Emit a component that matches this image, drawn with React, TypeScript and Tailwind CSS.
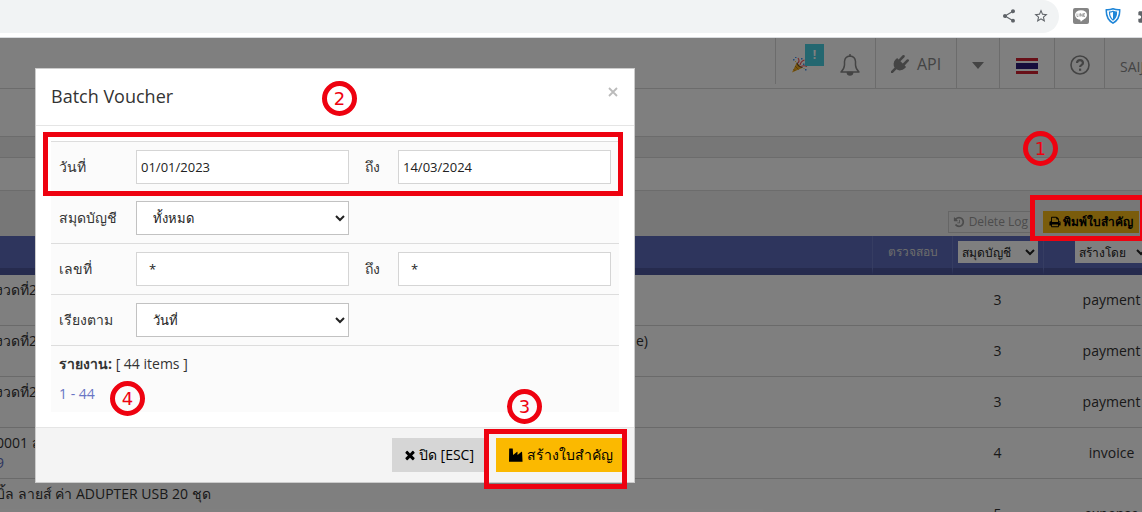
import { ReactNode } from 'react';
import { MdShare, MdStarBorder, MdExtension } from 'react-icons/md';

interface IconProps {
  d: string;
  className?: string;
}

// Font Awesome 4 outlines, all on the same 1792 grid
const PLUG = 'M1755 453q37 38 37 90.5t-37 90.5l-401 400 150 150-160 160q-163 163-389.5 186.5t-411.5-100.5l-362 362h-181v-181l362-362q-124-185-100.5-411.5t186.5-389.5l160-160 150 150 400-401q38-37 91-37t90 37 37 90.5-37 90.5l-400 401 234 234 401-400q38-37 91-37t90 37z';
const PRINT = 'M448 1536h896v-256h-896v256zm0-640h896v-384h-160q-40 0-68-28t-28-68v-160h-640v640zm1152 64q0-26-19-45t-45-19-45 19-19 45 19 45 45 19 45-19 19-45zm128 0v416q0 13-9.5 22.5t-22.5 9.5h-224v160q0 40-28 68t-68 28h-960q-40 0-68-28t-28-68v-160h-224q-13 0-22.5-9.5t-9.5-22.5v-416q0-79 56.5-135.5t135.5-56.5h64v-544q0-40 28-68t68-28h672q40 0 88 20t76 48l152 152q28 28 48 76t20 88v256h64q79 0 135.5 56.5t56.5 135.5z';
const HISTORY = 'M1664 896q0 156-61 298t-164 245-245 164-298 61q-172 0-327-72.5t-264-204.5q-7-10-6.5-22.5t8.5-20.5l137-138q10-9 25-9 16 2 23 12 73 95 179 147t225 52q104 0 198.5-40.5t163.5-109.5 109.5-163.5 40.5-198.5-40.5-198.5-109.5-163.5-163.5-109.5-198.5-40.5q-98 0-188 35.5t-160 101.5l137 138q31 30 14 69-17 40-59 40h-448q-26 0-45-19t-19-45v-448q0-42 40-59 39-17 69 14l130 129q107-101 244.5-156.5t284.5-55.5q156 0 298 61t245 164 164 245 61 298zm-640-288v448q0 14-9 23t-23 9h-320q-14 0-23-9t-9-23v-64q0-14 9-23t23-9h224v-352q0-14 9-23t23-9h64q14 0 23 9t9 23z';
const TIMES = 'M1490 1322q0 40-28 68l-136 136q-28 28-68 28t-68-28l-294-294-294 294q-28 28-68 28t-68-28l-136-136q-28-28-28-68t28-68l294-294-294-294q-28-28-28-68t28-68l136-136q28-28 68-28t68 28l294 294 294-294q28-28 68-28t68 28l136 136q28 28 28 68t-28 68l-294 294 294 294q28 28 28 68z';
const INDUSTRY = 'M60 60h380q40 0 44 40l40 800 520-420q40-20 44 30v390l520-420q60-30 64 40l60 1200q0 30-30 30H30q-30 0-30-30L20 100q0-40 40-40z';

function Icon({ d, className }: IconProps) {
  return (
    <svg viewBox="0 0 1792 1792" fill="currentColor" className={className} aria-hidden="true">
      <path d={d} />
    </svg>
  );
}

function BrowserBar() {
  return (
    <div className="flex h-[38px] shrink-0 items-start border-b border-[#d9dbde] bg-white">
      <div className="flex h-[33px] flex-1 items-center justify-end gap-4 rounded-r-full bg-[#f1f3f4] pr-[10px] pb-px text-[#5f6368]">
        <MdShare className="h-4 w-4" />
        <MdStarBorder className="h-4 w-4" />
      </div>
      <div className="flex h-[33px] items-center gap-4 overflow-hidden pb-px pl-[14px]">
        <svg viewBox="0 0 16 16" className="h-4 w-4">
          <rect width="16" height="16" rx="2" fill="#858585" />
          <ellipse cx="8" cy="7" rx="6" ry="4.8" fill="#fff" />
          <path d="M7 11h4l-3.200 2.800z" fill="#fff" />
          <path d="M4 5.500v3h1.300M6.200 5.500v3M7.500 8.500v-3l1.800 3v-3M12 5.500h-1.500v3h1.500M10.500 7h1.400" fill="none" stroke="#858585" strokeWidth=".7" />
        </svg>
        <svg viewBox="0 0 16 16" className="h-4 w-4">
          <path d="M1.300 1.700Q4.500 2 8 .8q3.500 1.200 6.700.9.500 9.300-6.700 13.500Q.8 11 1.300 1.700z" fill="#fff" stroke="#1f86d8" strokeWidth="1.500" />
          <path d="M4.500 4.200q2 0 3.500-.9 1.500.9 3.500.9 0 5.300-3.500 7.800-3.500-2.500-3.500-7.800z" fill="#fff" stroke="#1f86d8" strokeWidth="1.200" />
          <path d="M8 3.300q1.500.9 3.500.9 0 5.300-3.500 7.800z" fill="#1f86d8" />
        </svg>
        <MdExtension className="-mr-[11px] h-4 w-4 shrink-0 text-[#5f6368]" />
      </div>
    </div>
  );
}

function TopNav() {
  return (
    <nav className="flex h-[51px] items-stretch justify-end border-b border-[#d8d8d8] bg-white text-[#888]">
      <div className="mb-1 flex w-[100px] items-center border-l border-[#d8d8d8] pt-[7px] pl-4">
        <button className="relative h-6 w-8" aria-label="News">
          <svg viewBox="0 0 16 16" className="h-4 w-4">
            <path d="M4.500 6 0 15.500 10 11z" fill="#f0ac20" />
            <path d="M4.500 6q1 4 5.500 5l1-.8Q6.500 9.500 5.200 5z" fill="#6b4a1e" />
            <path d="M1.500 12.200 3.300 14M3 9l3.600 3.600" fill="none" stroke="#a86c10" strokeWidth=".8" />
            <path d="M6 6q2-2 0-5M8 8q1-4 4.500-5M9 9.500q3-1.500 6 0" fill="none" stroke="#f05858" strokeWidth="1.200" />
            <path d="M1 2h1.500v1.500H1zM9 1h1.500v1.500H9zM11 6.500h1.500V8H11zM13 12h1.500v1.500H13zM3 0h1.500v1H3z" fill="#4090f0" />
            <path d="M3 4h1v1H3zM13 5h1.500v1H13zM11.500 11h1v1h-1z" fill="#f0d040" />
          </svg>
          <span className="absolute -top-[9px] left-[13px] flex h-[22px] w-[19px] items-center justify-center bg-[#48cee0] text-xs font-bold text-white">!</span>
        </button>
        <button className="ml-4" aria-label="Notifications">
          <svg viewBox="0 0 20 22" className="h-[22px] w-5" fill="none" stroke="currentColor" strokeWidth="1.500" strokeLinejoin="round">
            <path d="M10 2Q5 2.300 4.500 7.500V11Q4.300 15 1 18h18q-3.300-3-3.500-7V7.500Q15 2.300 10 2z" />
            <path d="M7.300 18.500h5.400Q12.500 21 10 21t-2.700-2.500z" fill="currentColor" />
            <path d="M10 0v2" />
          </svg>
        </button>
      </div>
      <a href="#api" className="flex w-[81px] items-center gap-2 border-l border-[#d8d8d8] pt-[2px] pl-[15px] text-base">
        <Icon d={PLUG} className="h-[18px] w-[18px]" />
        API
      </a>
      <button className="flex w-[43px] items-center justify-center border-l border-[#d8d8d8] pt-1" aria-label="More">
        <svg viewBox="0 0 12 7" className="h-[7px] w-3">
          <path d="M0 0h12L6 7z" fill="currentColor" />
        </svg>
      </button>
      <button className="flex w-[55px] items-center justify-center border-l border-[#d8d8d8] pt-[6px]" aria-label="Language">
        <svg viewBox="0 0 22 16" className="h-4 w-[22px]">
          <path d="M0 0h22v16H0z" fill="#d02030" />
          <path d="M0 3h22v10H0z" fill="#fff" />
          <path d="M0 5h22v6H0z" fill="#2c1c78" />
        </svg>
      </button>
      <button className="flex w-[50px] items-center justify-center border-l border-[#d8d8d8] pt-1" aria-label="Help">
        <svg viewBox="0 0 20 20" className="h-5 w-5" fill="none" stroke="currentColor">
          <circle cx="10" cy="10" r="9" strokeWidth="1.600" />
          <path d="M7 8q.2-2.800 3-2.800T13 8q0 1.300-1.600 2.100-1.300.7-1.300 1.900" strokeWidth="2.200" />
          <path d="M9 13.600h2.200v2.200H9z" fill="currentColor" stroke="none" />
        </svg>
      </button>
      <div className="flex w-[38px] items-center overflow-hidden border-l border-[#d8d8d8] pt-2 pl-[15px] text-sm">SAIJ</div>
    </nav>
  );
}

interface Voucher {
  detail: string;
  tail?: string;
  link?: string;
  count: number;
  source: string;
}

const vouchers: Voucher[] = [
  { detail: 'งวดที่2', count: 3, source: 'payment' },
  { detail: 'งวดที่2', tail: 'e)', count: 3, source: 'payment' },
  { detail: 'งวดที่2', count: 3, source: 'payment' },
  { detail: '0001 ส', link: '9', count: 4, source: 'invoice' },
  { detail: 'บิ้ล ลายส์ ค่า ADUPTER USB 20 ชุด', count: 5, source: 'expense' },
];

const headCell = 'h-[39px] border-b-[7px] border-b-[#4c569c] border-l border-l-[#6c7ac4] p-0 font-normal first:border-l-0';
const bodyCell = 'border-b border-[#d4d4d4] p-0 text-center';

function VoucherTable() {
  return (
    <table className="w-[calc(100%+38px)] table-fixed border-separate border-spacing-0 text-sm text-[#333]">
      <colgroup>
        <col />
        <col className="w-20" />
        <col className="w-[91px]" />
        <col className="w-[137px]" />
      </colgroup>
      <thead>
        <tr className="bg-[#5c6bba] text-xs text-white">
          <th className={headCell} />
          <th className={`${headCell} text-[#d8d8d8]`}>ตรวจสอบ</th>
          <th className={headCell}>
            <select aria-label="สมุดบัญชี" className="mx-auto block h-[22px] w-20 bg-white text-[#222]">
              <option>สมุดบัญชี</option>
            </select>
          </th>
          <th className={headCell}>
            <select aria-label="สร้างโดย" className="mx-auto block h-[22px] w-[74px] bg-white text-[#222]">
              <option>สร้างโดย</option>
            </select>
          </th>
        </tr>
      </thead>
      <tbody>
        {vouchers.map((v, i) => (
          <tr key={i} className="h-[51px] last:h-[70px]">
            <td className="border-b border-[#d4d4d4] p-0 pt-[5px] align-top leading-5 whitespace-nowrap">
              <div className="-ml-1 flex">
                <span className="min-w-[640px]">{v.detail}</span>
                {v.tail}
              </div>
              {v.link && <a href="#voucher" className="-ml-1 block text-[#5c6bc0]">{v.link}</a>}
            </td>
            <td className={bodyCell} />
            <td className={bodyCell}>{v.count}</td>
            <td className={bodyCell}>{v.source}</td>
          </tr>
        ))}
      </tbody>
    </table>
  );
}

function Marker({ n, className }: { n: number; className: string }) {
  return (
    <span className={`absolute flex h-[35px] w-[35px] items-center justify-center rounded-full border-5 border-[#ee0210] font-['DejaVu_Sans'] text-lg text-[#ee0210] ${className}`}>
      {n}
    </span>
  );
}

function Row({ label, htmlFor, children }: { label: string; htmlFor: string; children: ReactNode }) {
  return (
    <div className="flex h-[51px] items-center border-t border-[#ddd] pr-2 pl-2">
      <label htmlFor={htmlFor} className="w-[77px] shrink-0">{label}</label>
      {children}
    </div>
  );
}

const field = 'h-[34px] w-[213px] border bg-white text-[13px] text-[#222]';

function BatchVoucherDialog() {
  return (
    <div role="dialog" aria-labelledby="dialog-title" className="absolute top-[30px] left-[35px] w-[600px] border border-[#ccc] bg-white text-sm text-[#333]">
      <header className="flex h-[57px] items-center justify-between border-b border-[#e5e5e5] px-[15px] pb-[2px]">
        <h4 id="dialog-title" className="text-lg">Batch Voucher</h4>
        <button aria-label="Close" className="mb-2 text-[#bbb]">
          <svg viewBox="0 0 10 10" className="h-[10px] w-3" fill="none" stroke="currentColor" strokeWidth="1.800">
            <path d="m1 1 8 8M9 1 1 9" />
          </svg>
        </button>
      </header>

      <div className="p-[15px]">
        <div className="bg-[#fbfbfb]">
          <Row label="วันที่" htmlFor="date-from">
            <input id="date-from" defaultValue="01/01/2023" className={`${field} border-[#d5d5d5] px-1`} />
            <label htmlFor="date-to" className="w-[49px] pl-4">ถึง</label>
            <input id="date-to" defaultValue="14/03/2024" className={`${field} border-[#d5d5d5] px-1`} />
          </Row>
          <Row label="สมุดบัญชี" htmlFor="book">
            <select id="book" className={`${field} border-[#c2c2c2] pl-3`}>
              <option>ทั้งหมด</option>
            </select>
          </Row>
          <Row label="เลขที่" htmlFor="no-from">
            <input id="no-from" defaultValue="*" className={`${field} border-[#d5d5d5] px-3`} />
            <label htmlFor="no-to" className="w-[49px] pl-4">ถึง</label>
            <input id="no-to" defaultValue="*" className={`${field} border-[#d5d5d5] px-3`} />
          </Row>
          <Row label="เรียงตาม" htmlFor="sort">
            <select id="sort" className={`${field} border-[#c2c2c2] pl-3`}>
              <option>วันที่</option>
            </select>
          </Row>
          <div className="border-t border-[#ddd] px-2 pt-2 pb-2 leading-5">
            <p><b>รายงาน:</b> [ 44 items ]</p>
            <a href="#report" className="mt-[10px] block text-[#6875c4]">1 - 44</a>
          </div>
        </div>
      </div>

      <footer className="flex h-[55px] items-center justify-end gap-2 border-t border-[#e5e5e5] bg-[#f4f4f4] pr-[10px] text-black">
        <button className="flex h-[34px] items-center gap-[2px] bg-[#d6d6d6] pr-[14px] pl-[11px]">
          <Icon d={TIMES} className="h-[14px] w-[14px]" />
          ปิด [ESC]
        </button>
        <button className="flex h-[34px] items-center gap-1 bg-[#fbb900] pr-[11px] pl-[13px]">
          <Icon d={INDUSTRY} className="h-[14px] w-[14px]" />
          สร้างใบสำคัญ
        </button>
      </footer>

      <span className="pointer-events-none absolute top-[63px] left-[7px] h-16 w-[580px] border-5 border-[#ee0210]" />
      <span className="pointer-events-none absolute top-[360px] left-[448px] h-[60px] w-[143px] border-5 border-[#ee0210]" />
      <Marker n={2} className="top-3 left-[286px]" />
      <Marker n={3} className="top-[320px] left-[471px]" />
      <Marker n={4} className="top-[312px] left-[74px]" />
    </div>
  );
}

export default function App() {
  return (
    <div className="flex h-screen flex-col overflow-hidden font-['Open_Sans',sans-serif]">
      <BrowserBar />
      <div className="relative flex-1 overflow-hidden">
        <div className="bg-white">
          <TopNav />
          <div className="h-12 border-b border-[#d8d8d8]" />
          <div className="h-5 bg-[#efefef]" />
          <div className="h-[34px] border-y border-[#d8d8d8]" />
          <div className="flex h-[45px] items-end justify-end gap-[10px] bg-[#efefef] pr-[3px] pb-[3px]">
            <button disabled className="flex h-[22px] items-center gap-1 border border-[#ccc] px-1 text-xs text-[#999]">
              <Icon d={HISTORY} className="h-3 w-3" />
              Delete Log
            </button>
            <button className="flex h-[22px] items-center gap-[2px] bg-[#f5b818] px-[6px] text-xs font-bold text-black">
              <Icon d={PRINT} className="h-3 w-3" />
              พิมพ์ใบสำคัญ
            </button>
          </div>
          <VoucherTable />
        </div>
        <div className="absolute inset-0 bg-black/50" />
        <BatchVoucherDialog />
        <span className="pointer-events-none absolute top-[157px] right-[-3px] h-[46px] w-[115px] border-5 border-[#ee0210]" />
        <Marker n={1} className="top-[93px] right-[84px]" />
      </div>
    </div>
  );
}
